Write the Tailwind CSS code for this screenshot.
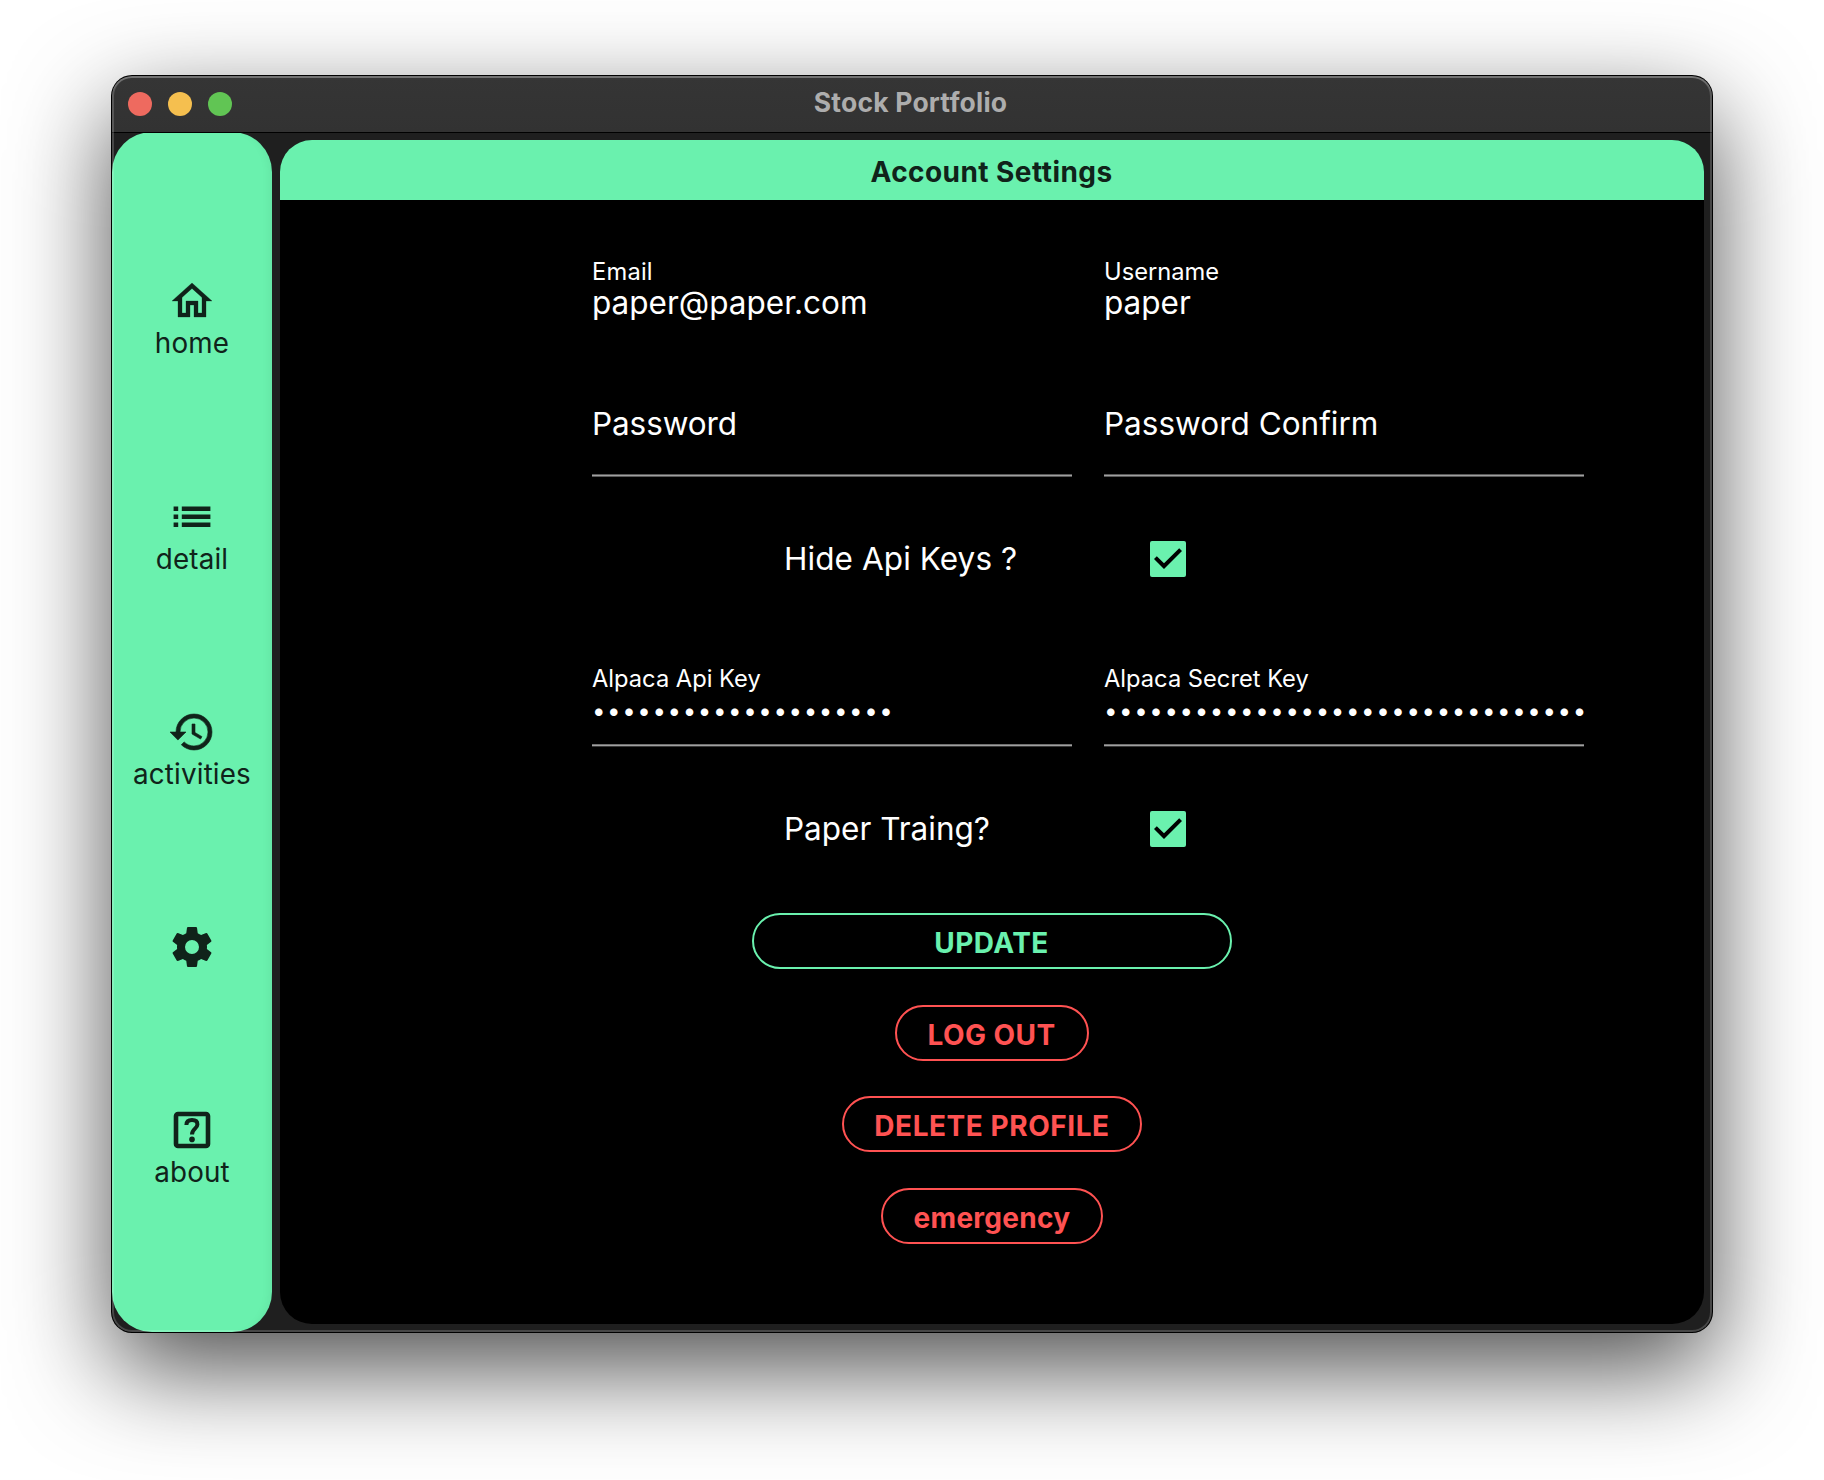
<!DOCTYPE html>
<html lang="en">
<head>
<meta charset="utf-8">
<title>Stock Portfolio</title>
<script src="https://cdn.jsdelivr.net/npm/@tailwindcss/browser@4"></script>
</head>
<body class="flex h-[1480px] w-[1824px] items-start overflow-hidden bg-white px-[112px] pt-[76px] font-[Inter,sans-serif]">

<div class="relative flex h-[1256px] w-[1600px] flex-col overflow-hidden rounded-[20px] bg-[#1f1f1f] shadow-[0_0_0_1px_#000,0_36px_100px_rgba(0,0,0,0.7)]">

  <!-- Title bar -->
  <header class="relative z-10 flex h-[57px] shrink-0 items-center border-b border-black bg-linear-to-b from-[#353535] to-[#323232]">
    <div class="flex w-[160px] gap-4 pl-4">
      <span class="size-6 rounded-full bg-[#ee6a5f]"></span>
      <span class="size-6 rounded-full bg-[#f5bf4f]"></span>
      <span class="size-6 rounded-full bg-[#61c554]"></span>
    </div>
    <h1 class="flex-1 pr-[163px] pb-[5px] text-center text-[26.5px] leading-[34px] font-bold tracking-[0.2px] text-[#adadad]">Stock Portfolio</h1>
  </header>

  <div class="-mt-px flex min-h-0 flex-1">

    <!-- Sidebar -->
    <nav class="flex w-[160px] shrink-0 flex-col items-center rounded-[40px] bg-[#6af1ae] pt-[145px] text-[27.8px] leading-[34px] tracking-[0.15px] text-[#10231a] shadow-[inset_-10px_0_10px_-8px_rgba(0,0,0,0.06)]">
      <a class="flex flex-col items-center gap-px">
        <svg class="size-12" viewBox="0 0 24 24" fill="currentColor" stroke="currentColor" stroke-width="0.15"><path d="M12 5.69L17 10.19V18H15V12H9V18H7V10.19L12 5.69M12 3L2 12H5V20H11V14H13V20H19V12H22L12 3Z"/></svg>
        <span>home</span>
      </a>
      <a class="mt-[133px] flex flex-col items-center gap-px">
        <svg class="size-12" viewBox="0 0 24 24" fill="currentColor"><path d="M2.8 6.75h2.3v2.3H2.8zM2.8 10.75h2.3v2.3H2.8zM2.8 14.75h2.3v2.3H2.8zM6.9 6.75h14.3v2.3H6.9zM6.9 10.75h14.3v2.3H6.9zM6.9 14.75h14.3v2.3H6.9z"/></svg>
        <span>detail</span>
      </a>
      <a class="mt-[132px] flex flex-col items-center gap-px">
        <svg class="size-12" viewBox="0 0 24 24" fill="currentColor" stroke="currentColor" stroke-width="0.3"><path d="M13.5 8H12V13L16.28 15.54L17 14.33L13.5 12.25V8M13 3A9 9 0 0 0 4 12H1L4.96 16.03L9 12H6A7 7 0 0 1 13 5A7 7 0 0 1 20 12A7 7 0 0 1 13 19C11.07 19 9.32 18.21 8.06 16.94L6.64 18.36C8.27 20 10.5 21 13 21A9 9 0 0 0 22 12A9 9 0 0 0 13 3"/></svg>
        <span>activities</span>
      </a>
      <a class="mt-[132px] flex flex-col items-center">
        <svg class="size-12" viewBox="0 0 24 24" fill="currentColor"><path d="M12 15.5A3.5 3.5 0 0 1 8.5 12A3.5 3.5 0 0 1 12 8.5A3.5 3.5 0 0 1 15.5 12A3.5 3.5 0 0 1 12 15.5M19.43 12.97C19.47 12.65 19.5 12.33 19.5 12C19.5 11.67 19.47 11.34 19.43 11L21.54 9.37C21.73 9.22 21.78 8.95 21.66 8.73L19.66 5.27C19.54 5.05 19.27 4.96 19.05 5.05L16.56 6.05C16.04 5.66 15.5 5.32 14.87 5.07L14.5 2.42C14.46 2.18 14.25 2 14 2H10C9.75 2 9.54 2.18 9.5 2.42L9.13 5.07C8.5 5.32 7.96 5.66 7.44 6.05L4.95 5.05C4.73 4.96 4.46 5.05 4.34 5.27L2.34 8.73C2.21 8.95 2.27 9.22 2.46 9.37L4.57 11C4.53 11.34 4.5 11.67 4.5 12C4.5 12.33 4.53 12.65 4.57 12.97L2.46 14.63C2.27 14.78 2.21 15.05 2.34 15.27L4.34 18.73C4.46 18.95 4.73 19.03 4.95 18.95L7.44 17.94C7.96 18.34 8.5 18.68 9.13 18.93L9.5 21.58C9.54 21.82 9.75 22 10 22H14C14.25 22 14.46 21.82 14.5 21.58L14.87 18.93C15.5 18.67 16.04 18.34 16.56 17.94L19.05 18.95C19.27 19.03 19.54 18.95 19.66 18.73L21.66 15.27C21.78 15.05 21.73 14.78 21.54 14.63L19.43 12.97Z"/></svg>
      </a>
      <a class="mt-[135px] flex flex-col items-center gap-px">
        <svg class="size-12" viewBox="0 0 24 24" fill="none" stroke="currentColor"><rect x="4" y="4" width="16" height="16" rx="1" stroke-width="2.3"/><path d="M9.2 9.5C9.2 7.6 10.3 7 12 7C13.8 7 14.7 7.9 14.7 9.2C14.7 11.3 12 11.4 12 14.2" stroke-width="2"/><circle cx="12" cy="16.7" r="1.4" fill="currentColor" stroke="none"/></svg>
        <span>about</span>
      </a>
    </nav>

    <!-- Account settings -->
    <main class="m-2 flex min-w-0 flex-1 flex-col overflow-hidden rounded-[32px] bg-black text-white">
      <h2 class="h-[60px] shrink-0 bg-[#6af1ae] pt-[15px] pr-px text-center text-[28px] leading-[34px] font-bold tracking-[0.44px] text-[#10231a]">Account Settings</h2>

      <section class="ml-[312px] flex w-[992px] flex-col pt-[58px] text-[31.5px] leading-[34px]">
        <div class="grid grid-cols-2 gap-x-8">
          <div>
            <div class="text-[23.7px] leading-[27px] tracking-[0.2px]">Email</div>
            <div class="mt-px">paper@paper.com</div>
          </div>
          <div>
            <div class="text-[23.7px] leading-[27px]">Username</div>
            <div class="mt-px">paper</div>
          </div>
        </div>

        <div class="mt-[87px] grid grid-cols-2 gap-x-8">
          <div class="flex flex-col gap-[33px]">
            <span class="tracking-[-0.1px]">Password</span>
            <span class="h-[3px] border-y border-[#585858] bg-[#a0a0a0]"></span>
          </div>
          <div class="flex flex-col gap-[33px]">
            <span>Password Confirm</span>
            <span class="h-[3px] border-y border-[#585858] bg-[#a0a0a0]"></span>
          </div>
        </div>

        <div class="mt-[64px] flex h-9 items-center pl-[192px]">
          <span class="w-[366px] tracking-[0.08px]">Hide Api Keys ?</span>
          <span class="size-9 rounded-[2px] bg-[#6af1ae] text-black"><svg class="size-9" viewBox="3 3 18 18" fill="currentColor"><path d="M10 17L5 12L6.41 10.59L10 14.17L17.59 6.58L19 8L10 17Z"/></svg></span>
        </div>

        <div class="mt-[88px] grid grid-cols-2 gap-x-8">
          <div class="flex flex-col">
            <span class="text-[23.7px] leading-[27px]">Alpaca Api Key</span>
            <span class="mt-0.5 text-[24px] leading-[34px] tracking-[1.62px] whitespace-nowrap">••••••••••••••••••••</span>
            <span class="mt-[16px] h-[3px] border-y border-[#707070] border-b-[#383838] bg-[#a0a0a0]"></span>
          </div>
          <div class="flex flex-col">
            <span class="text-[23.7px] leading-[27px]">Alpaca Secret Key</span>
            <span class="mt-0.5 text-[24px] leading-[34px] tracking-[1.62px] whitespace-nowrap">••••••••••••••••••••••••••••••••</span>
            <span class="mt-[16px] h-[3px] border-y border-[#707070] border-b-[#383838] bg-[#a0a0a0]"></span>
          </div>
        </div>

        <div class="mt-[64px] flex h-9 items-center pl-[192px]">
          <span class="w-[366px]">Paper Traing?</span>
          <span class="size-9 rounded-[2px] bg-[#6af1ae] text-black"><svg class="size-9" viewBox="3 3 18 18" fill="currentColor"><path d="M10 17L5 12L6.41 10.59L10 14.17L17.59 6.58L19 8L10 17Z"/></svg></span>
        </div>
      </section>

      <div class="mt-[66px] flex flex-col items-center gap-[35.7px] text-[28px] leading-[48px] font-bold tracking-[0.45px] text-[#ff5252]">
        <button class="h-14 w-[480px] rounded-full border-2 border-[#6af1ae] pt-1 pr-px text-[#6af1ae]">UPDATE</button>
        <button class="h-14 w-[194px] rounded-full border-2 border-[#ff5252] pt-1 pr-px">LOG OUT</button>
        <button class="h-14 w-[300px] rounded-full border-2 border-[#ff5252] pt-1 tracking-[0.55px]">DELETE PROFILE</button>
        <button class="h-14 w-[222px] rounded-full border-2 border-[#ff5252] pt-1 tracking-[0.28px]">emergency</button>
      </div>
    </main>
  </div>

  <!-- Light rim along the window edge -->
  <div class="pointer-events-none absolute inset-0 z-20 rounded-[20px] shadow-[inset_0_0_0_2px_rgba(255,255,255,0.18),inset_0_2px_0_0_rgba(255,255,255,0.15)]"></div>
</div>

</body>
</html>
